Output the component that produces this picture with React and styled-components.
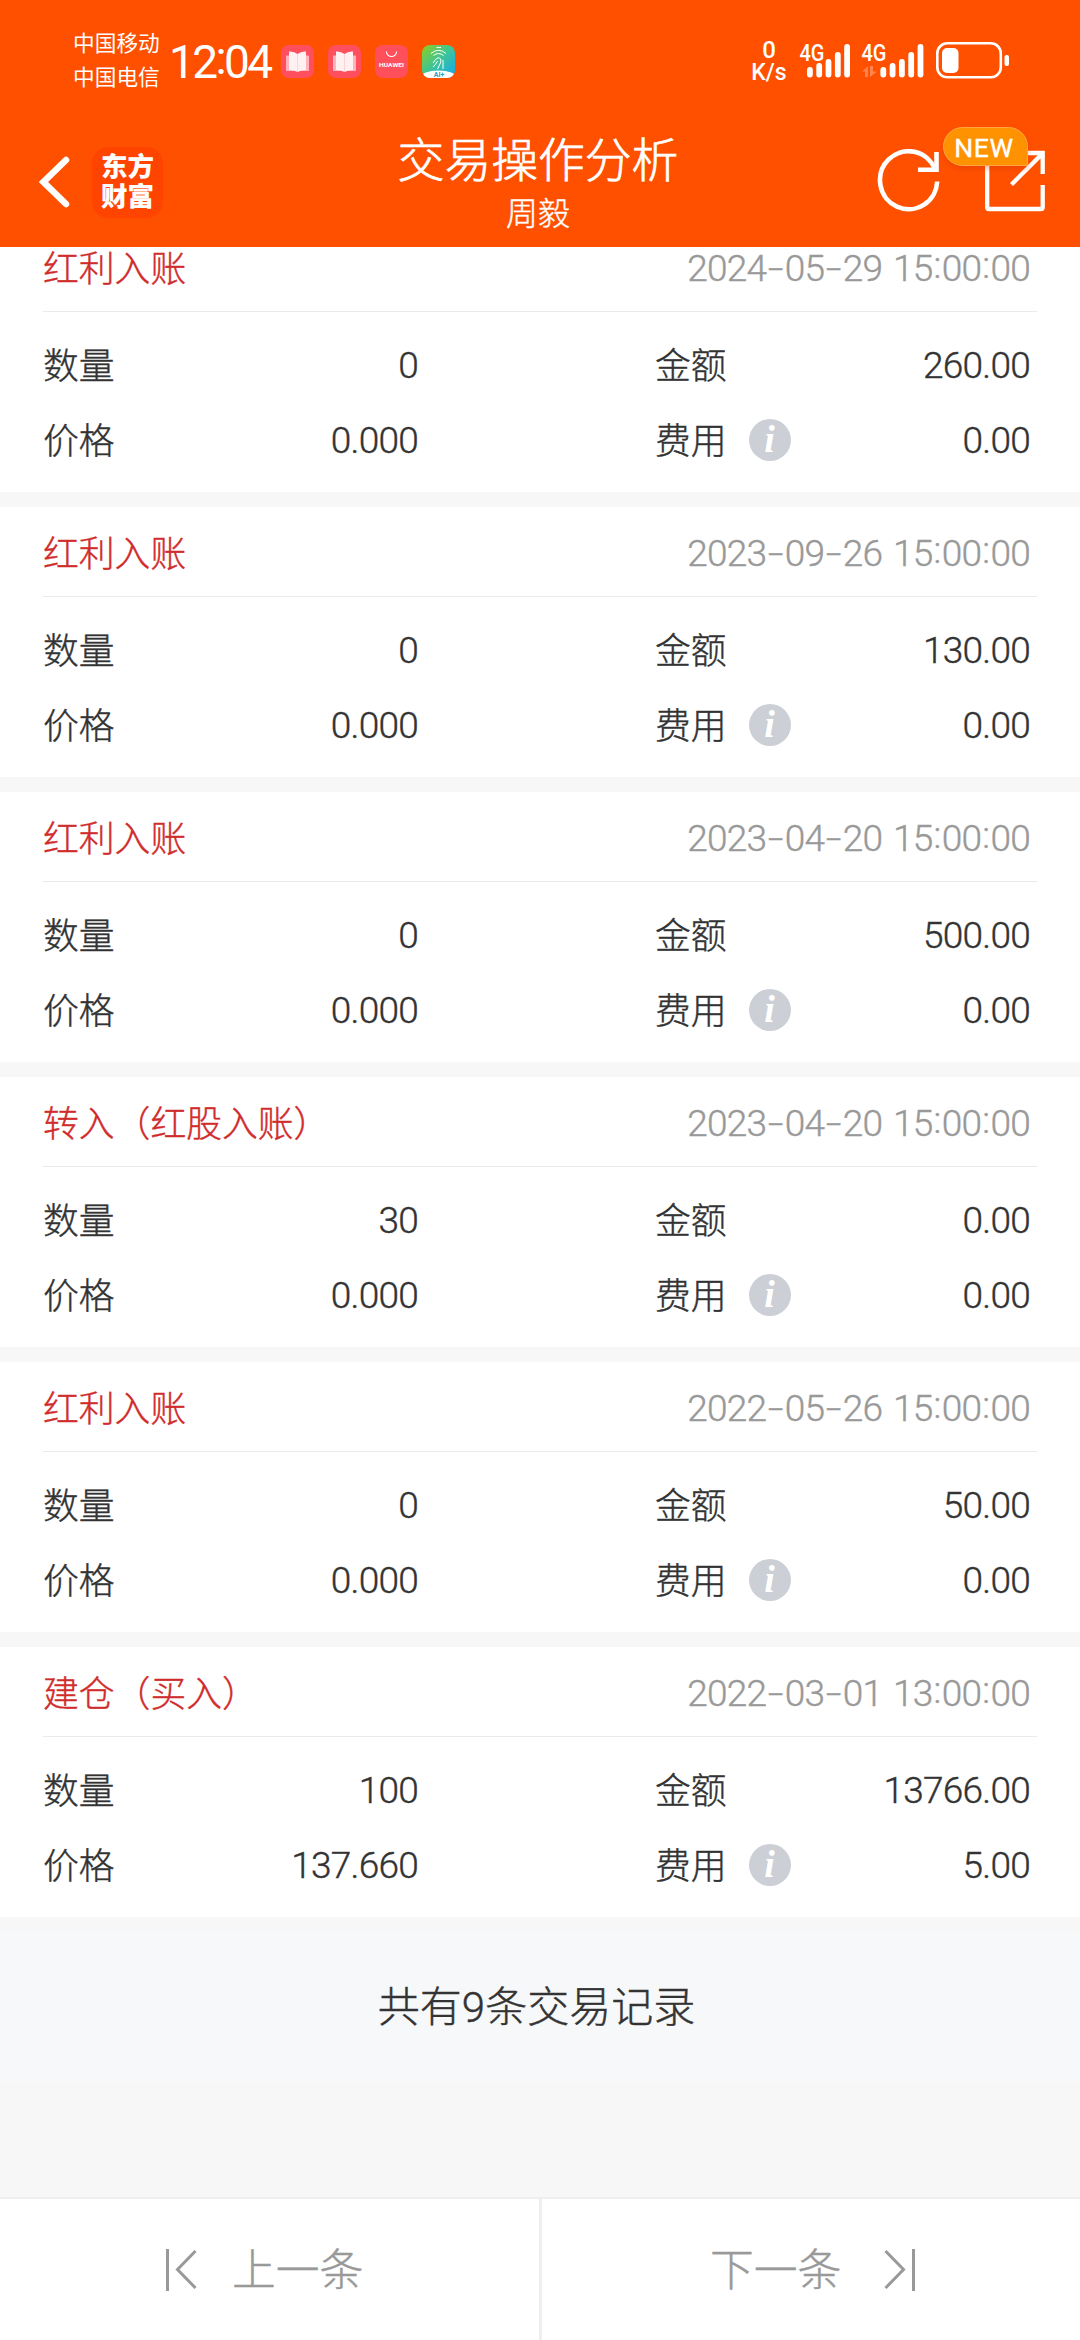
import React from "react";
import styled, { createGlobalStyle } from "styled-components";

const GlobalStyle = createGlobalStyle`
  * {
    box-sizing: border-box;
  }

  body {
    margin: 0;
    background-color: #f7f7f7;
    font-family: Roboto, "Noto Sans CJK SC", sans-serif;
    font-weight: 300;
    color: #333;
    -webkit-text-stroke-width: 0.4px;
  }
`;

const Page = styled.div`
  width: 1080px;
  height: 2340px;
  display: flex;
  flex-direction: column;
  overflow: hidden;
`;

const Header = styled.header`
  height: 247px;
  flex-shrink: 0;
  background-color: #ff5000;
  color: #fff;
`;

const StatusBar = styled.div`
  height: 122px;
  padding: 0 71px 0 73px;
  display: flex;
  align-items: center;
  -webkit-text-stroke-width: 0;
`;

const Carriers = styled.div`
  width: 96px;
  font-size: 21.7px;
  line-height: 34px;
  font-weight: 400;
  white-space: nowrap;
`;

const Clock = styled.div`
  width: 112px;
  padding-top: 2px;
  font-size: 46px;
  line-height: 50px;
  font-weight: 400;
  letter-spacing: -2.6px;
`;

const ClockColon = styled.span`
  display: inline-block;
  transform: translateY(-4px);
`;

const AppIcons = styled.div`
  display: flex;
  gap: 14px;
  flex: 1;
`;

const Speed = styled.div`
  width: 36px;
  margin-right: 12px;
  text-align: center;
  font-size: 23px;
  line-height: 22px;
  font-weight: 500;
`;

const SpeedValue = styled.div`
  font-size: 24px;
  line-height: 23px;
`;

const NavBar = styled.div`
  height: 125px;
  padding: 0 33px 0 39px;
  display: grid;
  grid-template-columns: 170px 1fr 180px;
`;

const NavLeft = styled.div`
  display: flex;
  align-items: center;
  gap: 22px;
  padding-bottom: 5px;
`;

const Logo = styled.div`
  width: 71px;
  height: 71px;
  padding: 5px 0 0 9px;
  border-radius: 16px;
  background-color: #ff4400;
  font-size: 26.5px;
  line-height: 30px;
  font-weight: 900;
  -webkit-text-stroke-width: 0;
`;

const Titles = styled.div`
  display: flex;
  flex-direction: column;
  align-items: center;
  padding-top: 11px;
`;

const Title = styled.div`
  font-size: 46.8px;
  line-height: 56px;
  -webkit-text-stroke-width: 0.7px;
`;

const SubTitle = styled.div`
  font-size: 32px;
  line-height: 50px;
`;

const NavRight = styled.div`
  position: relative;
  display: flex;
  justify-content: flex-end;
  gap: 44px;
  padding-top: 27px;
`;

const Badge = styled.span`
  position: absolute;
  top: 5px;
  right: 19px;
  width: 85px;
  height: 39px;
  padding-right: 3px;
  border: 1px solid #ffa640;
  border-radius: 20px 20px 0 20px;
  background-color: #ff9200;
  box-shadow: 0 3px 5px rgba(200, 50, 0, 0.3);
  font-size: 26.5px;
  line-height: 39px;
  font-weight: 400;
  letter-spacing: 0.6px;
  text-align: center;
`;

const List = styled.main`
  flex: 1;
  min-height: 0;
  display: flex;
  flex-direction: column;
  justify-content: flex-end;
  overflow: hidden;
`;

const Card = styled.section`
  height: 270px;
  flex-shrink: 0;
  margin-bottom: 15px;
  background-color: #fff;
`;

const CardHead = styled.div`
  height: 90px;
  margin: 0 43px;
  padding-right: 7px;
  display: flex;
  align-items: center;
  justify-content: space-between;
  border-bottom: 1px solid #ebebeb;
`;

const Kind = styled.span`
  padding-bottom: 2px;
  color: #d02c2c;
  font-size: 35.8px;
`;

const Time = styled.span`
  padding-top: 3px;
  color: #999;
  font-size: 37px;
  letter-spacing: -0.75px;
  word-spacing: 2.5px;
`;

const Dash = styled.span`
  display: inline-block;
  width: 18.4px;
  text-align: center;
  transform: scaleX(1.5);
`;

const Colon = styled.span`
  display: inline-block;
  width: 9.2px;
  text-align: center;
  transform: translateY(-3px);
`;

const CardBody = styled.div`
  padding: 16px 50px 0 43px;
  display: grid;
  grid-template-columns: 375px 375px;
  justify-content: space-between;
  grid-auto-rows: 75px;
`;

const Cell = styled.div`
  display: flex;
  align-items: center;
`;

const Label = styled.span`
  padding-bottom: 5px;
  font-size: 35.8px;
`;

const Value = styled.span`
  margin-left: auto;
  font-size: 37px;
  letter-spacing: -0.75px;
`;

const Info = styled.i`
  width: 42px;
  height: 42px;
  margin: 0 0 1px 22px;
  border-radius: 50%;
  background-color: #cccfd5;
  color: #fff;
  font: italic bold 38px/40px "Liberation Serif", serif;
  text-align: center;
  -webkit-text-stroke-width: 0;
`;

const Total = styled.div`
  height: 150px;
  flex-shrink: 0;
  margin-bottom: 115px;
  padding: 46px 7px 0 0;
  background-color: #f7f8fa;
  font-size: 42px;
  line-height: 60px;
  text-align: center;
`;

const Footer = styled.footer`
  height: 143px;
  flex-shrink: 0;
  display: grid;
  grid-template-columns: 539px 541px;
  border-top: 2px solid #eee;
  background-color: #fff;
`;

const PageButton = styled.div`
  display: flex;
  align-items: center;
  gap: ${(props) => (props.$next ? "43px" : "35px")};
  padding-left: ${(props) => (props.$next ? "168px" : "166px")};
  border-left: ${(props) => (props.$next ? "3px solid #eee" : "none")};
  color: #999;
`;

const PageLabel = styled.span`
  padding-bottom: 6px;
  font-size: 43.8px;
`;

const records = [
    { kind: "红利入账", time: "2024-05-29 15:00:00", qty: "0", price: "0.000", amount: "260.00", fee: "0.00" },
    { kind: "红利入账", time: "2023-09-26 15:00:00", qty: "0", price: "0.000", amount: "130.00", fee: "0.00" },
    { kind: "红利入账", time: "2023-04-20 15:00:00", qty: "0", price: "0.000", amount: "500.00", fee: "0.00" },
    { kind: "转入（红股入账）", time: "2023-04-20 15:00:00", qty: "30", price: "0.000", amount: "0.00", fee: "0.00" },
    { kind: "红利入账", time: "2022-05-26 15:00:00", qty: "0", price: "0.000", amount: "50.00", fee: "0.00" },
    { kind: "建仓（买入）", time: "2022-03-01 13:00:00", qty: "100", price: "137.660", amount: "13766.00", fee: "5.00" },
];

const BookIcon = () => (
    <svg width="33" height="33" viewBox="0 0 33 33">
        <rect width="33" height="33" rx="8" fill="#ff4f5e" />
        <path d="M5 10.500H28V26H5Z" fill="#ffb3b8" />
        <path d="M8 6.500Q13 6 16.500 9Q20 6 25 6.500V25Q20 25 16.500 27Q13 25 8 25Z" fill="#fff0f1" />
        <path d="M16.500 9V27" stroke="#ffd3d6" strokeWidth="1" />
    </svg>
);

const HuaweiIcon = () => (
    <svg width="33" height="33" viewBox="0 0 33 33">
        <rect width="33" height="33" rx="8" fill="#ff4f5a" />
        <path d="M11.500 6.500A5 5 0 0 0 21.500 6.500" fill="none" stroke="#fff" strokeWidth="1.100" />
        <text x="16.500" y="21.500" textAnchor="middle" textLength="25" lengthAdjust="spacingAndGlyphs" fontSize="6" fontWeight="700" fill="#fff">HUAWEI</text>
    </svg>
);

const FingerIcon = () => (
    <svg width="33" height="33" viewBox="0 0 33 33">
        <defs>
            <linearGradient id="finger" x1="0" y1="0" x2="1" y2="1">
                <stop offset="0" stopColor="#8fce1c" />
                <stop offset="0.5" stopColor="#3cc49a" />
                <stop offset="1" stopColor="#12a8f5" />
            </linearGradient>
            <clipPath id="round">
                <rect width="33" height="33" rx="8" />
            </clipPath>
        </defs>
        <g clipPath="url(#round)">
            <rect width="33" height="33" fill="url(#finger)" />
            <g fill="none" stroke="#fff" strokeWidth="1">
                <path d="M14.500 2.500H19M9 8.500Q16.500 2 24 8.500M11.500 10.500Q16.500 6.500 21.500 10.500" />
                <path d="M11 18Q14.500 12 17.500 13Q20 14 18 19L15.500 24M11 22Q13.500 20 15.500 16M21 15V24" />
            </g>
            <ellipse cx="16.500" cy="32" rx="18" ry="6.500" fill="#fff" />
            <text x="17" y="32" textAnchor="middle" fontSize="7" fontWeight="700" fill="#2a9fc0">AI+</text>
        </g>
    </svg>
);

const Signals = () => (
    <svg width="210" height="40" viewBox="799 41 210 40" fill="#fff">
        <text x="799.500" y="60.700" fontSize="23" fontWeight="500" textLength="25" lengthAdjust="spacingAndGlyphs">4G</text>
        <text x="861.500" y="60.700" fontSize="23" fontWeight="500" textLength="25" lengthAdjust="spacingAndGlyphs">4G</text>
        {[807, 880.4].map((x) =>
            [67, 63, 59, 52, 44].map((y, i) => (
                <rect key={x + y} x={x + i * 9.3} y={y} width="5.800" height={77.5 - y} rx="2.900" />
            ))
        )}
        <path d="M862 71.500L868 66V77H865V71.500ZM870 66H873V71.500H877L870 77Z" opacity="0.3" />
        <rect x="937.300" y="43.300" width="63.500" height="34" rx="10" fill="none" stroke="#fff" strokeWidth="2.600" />
        <rect x="942" y="48" width="16.500" height="25" rx="5" />
        <rect x="1004.500" y="55" width="4.500" height="11" rx="2" />
    </svg>
);

const BackIcon = () => (
    <svg width="31" height="54" viewBox="39 155 31 54">
        <path d="M66 160L43.500 182L66 204" fill="none" stroke="#fff" strokeWidth="6.500" strokeLinecap="round" />
    </svg>
);

const RefreshIcon = () => (
    <svg width="64" height="64" viewBox="877 149 64 64" fill="none" stroke="#fff" strokeWidth="4.600">
        <path d="M937.200 181.500A28.600 29 0 1 1 935 169" />
        <path d="M936.500 152V169.800H918" />
    </svg>
);

const ShareIcon = () => (
    <svg width="62" height="64" viewBox="985 149 62 64" fill="none" stroke="#fff" strokeWidth="4.300">
        <path d="M1000 153H987.200V207.500Q987.200 209 989 209H1041Q1042.700 209 1042.700 207.500V185" />
        <path d="M1020 153H1042.700V174M1042 154L1011.500 184.500" />
    </svg>
);

const PrevIcon = () => (
    <svg width="31" height="42" viewBox="0 0 31 42" fill="none" stroke="#999" strokeWidth="3">
        <path d="M1.500 0V42M29.500 2L11.500 20.500L29.500 39" />
    </svg>
);

const NextIcon = () => (
    <svg width="31" height="42" viewBox="0 0 31 42" fill="none" stroke="#999" strokeWidth="3">
        <path d="M29.500 0V42M1.500 2L19.500 20.500L1.500 39" />
    </svg>
);

const DateTime = ({ value }) => (
    <Time>
        {value.split(/([-:])/).map((part, i) => {
            if (part === "-") return <Dash key={i}>-</Dash>;
            if (part === ":") return <Colon key={i}>:</Colon>;
            return part;
        })}
    </Time>
);

const Record = ({ item }) => (
    <Card>
        <CardHead>
            <Kind>{item.kind}</Kind>
            <DateTime value={item.time} />
        </CardHead>
        <CardBody>
            <Cell><Label>数量</Label><Value>{item.qty}</Value></Cell>
            <Cell><Label>金额</Label><Value>{item.amount}</Value></Cell>
            <Cell><Label>价格</Label><Value>{item.price}</Value></Cell>
            <Cell><Label>费用</Label><Info>i</Info><Value>{item.fee}</Value></Cell>
        </CardBody>
    </Card>
);

const App = () => {
    return (
        <Page>
            <GlobalStyle />
            <Header>
                <StatusBar>
                    <Carriers>
                        <div>中国移动</div>
                        <div>中国电信</div>
                    </Carriers>
                    <Clock>12<ClockColon>:</ClockColon>04</Clock>
                    <AppIcons>
                        <BookIcon />
                        <BookIcon />
                        <HuaweiIcon />
                        <FingerIcon />
                    </AppIcons>
                    <Speed>
                        <SpeedValue>0</SpeedValue>
                        <div>K/s</div>
                    </Speed>
                    <Signals />
                </StatusBar>
                <NavBar>
                    <NavLeft>
                        <BackIcon />
                        <Logo>
                            <div>东方</div>
                            <div>财富</div>
                        </Logo>
                    </NavLeft>
                    <Titles>
                        <Title>交易操作分析</Title>
                        <SubTitle>周毅</SubTitle>
                    </Titles>
                    <NavRight>
                        <RefreshIcon />
                        <ShareIcon />
                        <Badge>NEW</Badge>
                    </NavRight>
                </NavBar>
            </Header>
            <List>
                {records.map((item, i) => (
                    <Record key={i} item={item} />
                ))}
                <Total>共有9条交易记录</Total>
            </List>
            <Footer>
                <PageButton>
                    <PrevIcon />
                    <PageLabel>上一条</PageLabel>
                </PageButton>
                <PageButton $next>
                    <PageLabel>下一条</PageLabel>
                    <NextIcon />
                </PageButton>
            </Footer>
        </Page>
    );
};

export default App;
